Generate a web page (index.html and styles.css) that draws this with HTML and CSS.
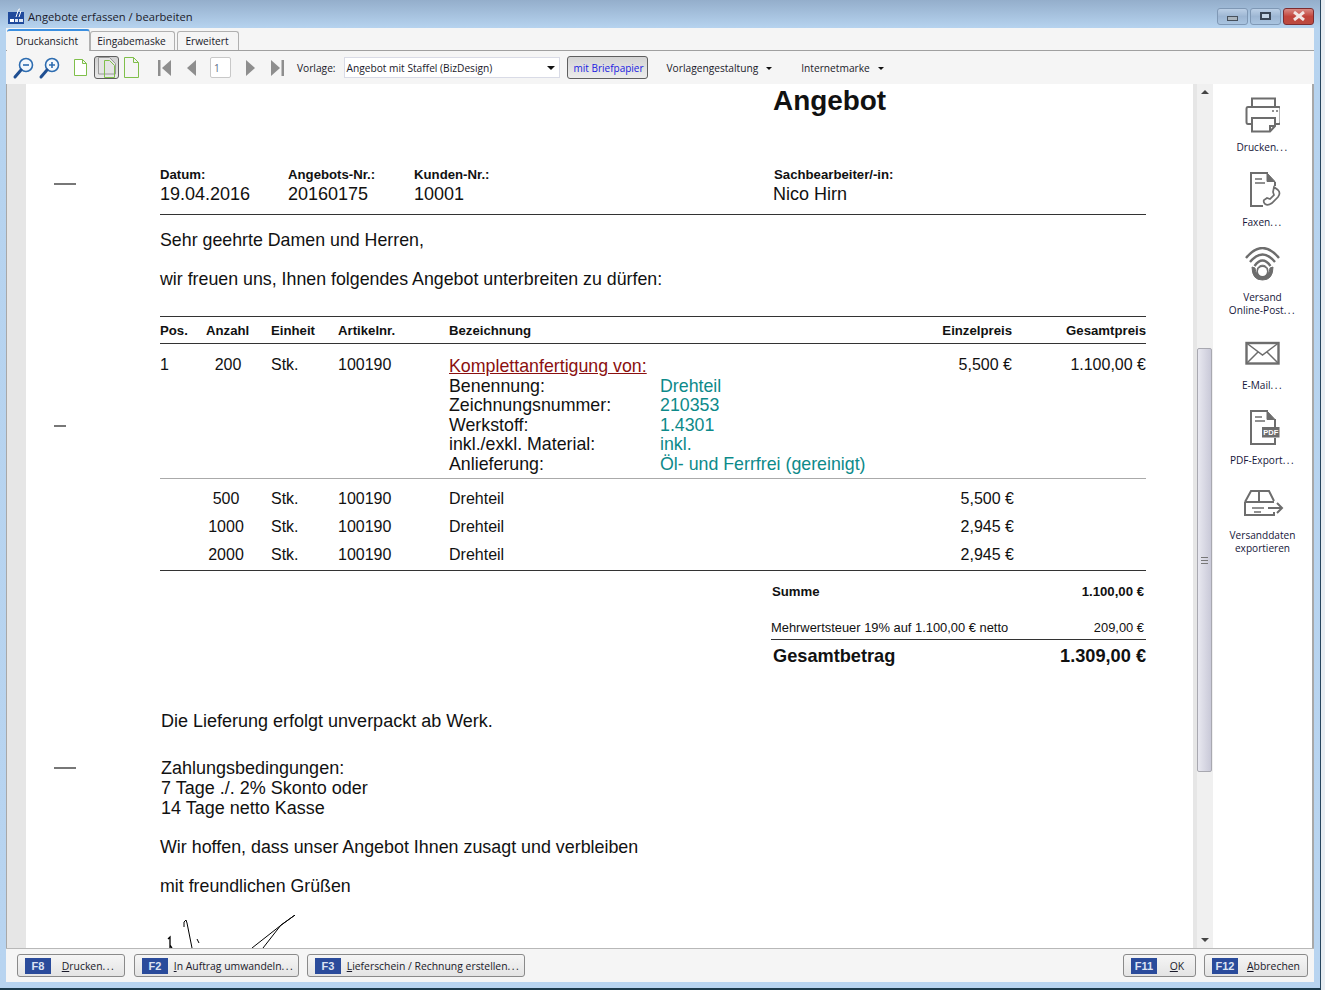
FILE: index.html
```html
<!DOCTYPE html>
<html lang="de">
<head>
    <meta charset="UTF-8">
    <meta name="viewport" content="width=device-width, initial-scale=1.0">
    <title>Angebote erfassen / bearbeiten</title>
    <link rel="stylesheet" href="styles.css">
</head>
<body>
    <div class="window">
        <div class="titlebar">
            <svg class="app-icon" width="16" height="16" viewBox="0 0 16 16">
                <rect x="0" y="4" width="16" height="12" fill="#1f4a9c"/>
                <path d="M8 9 L10 3 Q10.500 .5 12 1 M11 9 L13 3" stroke="#fff" stroke-width="1" fill="none"/>
                <rect x="2" y="11" width="4" height="3" fill="#fff"/>
                <rect x="7" y="11" width="3" height="3" fill="#dfe8f5"/>
                <rect x="11" y="11" width="4" height="3" fill="#dfe8f5"/>
            </svg>
            <span class="title">Angebote erfassen / bearbeiten</span>
            <div class="win-buttons">
                <div class="win-btn"><span class="min-glyph"></span></div>
                <div class="win-btn"><span class="max-glyph"></span></div>
                <div class="win-btn close">
                    <svg width="16" height="10" viewBox="0 0 16 10"><path d="M3 1 L13 9 M13 1 L3 9" stroke="#f2e6e4" stroke-width="3"/></svg>
                </div>
            </div>
        </div>

        <div class="client">
            <div class="tabs">
                <div class="tab active">Druckansicht</div>
                <div class="tab tab-2">Eingabemaske</div>
                <div class="tab tab-3">Erweitert</div>
            </div>

            <div class="toolbar">
                <svg class="tool-icon zoom-out" width="24" height="24" viewBox="0 0 24 24">
                    <circle cx="14" cy="9" r="6.5" fill="#f4f8fc" stroke="#2d6cb0" stroke-width="1.6"/>
                    <path d="M11 9 H17" stroke="#2d6cb0" stroke-width="1.6"/>
                    <path d="M9 14 L3 21" stroke="#1f4f92" stroke-width="3" stroke-linecap="round"/>
                </svg>
                <svg class="tool-icon zoom-in" width="24" height="24" viewBox="0 0 24 24">
                    <circle cx="14" cy="9" r="6.5" fill="#f4f8fc" stroke="#2d6cb0" stroke-width="1.6"/>
                    <path d="M11 9 H17 M14 6 V12" stroke="#2d6cb0" stroke-width="1.6"/>
                    <path d="M9 14 L3 21" stroke="#1f4f92" stroke-width="3" stroke-linecap="round"/>
                </svg>
                <svg class="page-small" width="13" height="17" viewBox="0 0 13 17">
                    <path d="M.5 .5 H8.5 L12.5 4.5 V16.5 H.5 Z M8.5 .5 V4.5 H12.5" fill="#fff" stroke="#7fbf4a"/>
                </svg>
                <div class="page-toggle">
                    <svg width="18" height="21" viewBox="0 0 18 21">
                        <path d="M.5 .5 H11.5 L17.5 6.5 V17 H.5 Z" fill="#e4e4e4" stroke="#9a9a9a"/>
                        <path d="M6.5 3.5 H11.5 L16.5 8.5 V20.5 H6.5 Z" fill="none" stroke="#7fbf4a"/>
                    </svg>
                </div>
                <svg class="page-large" width="15" height="21" viewBox="0 0 15 21">
                    <path d="M.5 .5 H9.5 L14.5 5.5 V20.5 H.5 Z M9.5 .5 V5.5 H14.5" fill="#f5f5f5" stroke="#7fbf4a"/>
                </svg>
                <svg class="nav-first" width="13" height="16" viewBox="0 0 13 16"><path d="M0 0 H2.5 V16 H0 Z M13 0 V16 L4 8 Z" fill="#8e8e8e"/></svg>
                <svg class="nav-prev" width="9" height="16" viewBox="0 0 9 16"><path d="M9 0 V16 L0 8 Z" fill="#8e8e8e"/></svg>
                <div class="page-input">1</div>
                <svg class="nav-next" width="9" height="16" viewBox="0 0 9 16"><path d="M0 0 V16 L9 8 Z" fill="#8e8e8e"/></svg>
                <svg class="nav-last" width="13" height="16" viewBox="0 0 13 16"><path d="M0 0 V16 L9 8 Z M10.5 0 H13 V16 H10.5 Z" fill="#8e8e8e"/></svg>
                <span class="vorlage-label">Vorlage:</span>
                <div class="select">
                    <span>Angebot mit Staffel (BizDesign)</span>
                    <i class="caret"></i>
                </div>
                <div class="brief-btn">mit Briefpapier</div>
                <div class="menu menu-1">Vorlagengestaltung<i class="caret small"></i></div>
                <div class="menu menu-2">Internetmarke<i class="caret small"></i></div>
            </div>

            <div class="main">
                <div class="margin-strip"></div>
                <div class="page">
                    <span class="fold fold-1"></span>
                    <span class="fold fold-2"></span>
                    <span class="fold fold-3"></span>

                    <h1>Angebot</h1>

                    <div class="meta">
                        <div><b>Datum:</b><span>19.04.2016</span></div>
                        <div><b>Angebots-Nr.:</b><span>20160175</span></div>
                        <div><b>Kunden-Nr.:</b><span>10001</span></div>
                        <div><b>Sachbearbeiter/-in:</b><span>Nico Hirn</span></div>
                    </div>

                    <p class="greeting">Sehr geehrte Damen und Herren,</p>
                    <p class="intro">wir freuen uns, Ihnen folgendes Angebot unterbreiten zu dürfen:</p>

                    <div class="row head">
                        <div>Pos.</div>
                        <div>Anzahl</div>
                        <div>Einheit</div>
                        <div>Artikelnr.</div>
                        <div>Bezeichnung</div>
                        <div class="num">Einzelpreis</div>
                        <div class="num">Gesamtpreis</div>
                    </div>

                    <div class="row item">
                        <div>1</div>
                        <div class="qty">200</div>
                        <div>Stk.</div>
                        <div>100190</div>
                        <div class="desc">
                            <div class="desc-title">Komplettanfertigung von:</div>
                            <div class="spec"><span>Benennung:</span><em>Drehteil</em></div>
                            <div class="spec"><span>Zeichnungsnummer:</span><em>210353</em></div>
                            <div class="spec"><span>Werkstoff:</span><em>1.4301</em></div>
                            <div class="spec"><span>inkl./exkl. Material:</span><em>inkl.</em></div>
                            <div class="spec"><span>Anlieferung:</span><em>Öl- und Ferrfrei (gereinigt)</em></div>
                        </div>
                        <div class="num">5,500 €</div>
                        <div class="num">1.100,00 €</div>
                    </div>

                    <div class="staffel">
                        <div class="row tier">
                            <div></div><div class="qty">500</div><div>Stk.</div><div>100190</div><div>Drehteil</div><div class="num wide">5,500 €</div><div></div>
                        </div>
                        <div class="row tier">
                            <div></div><div class="qty">1000</div><div>Stk.</div><div>100190</div><div>Drehteil</div><div class="num wide">2,945 €</div><div></div>
                        </div>
                        <div class="row tier">
                            <div></div><div class="qty">2000</div><div>Stk.</div><div>100190</div><div>Drehteil</div><div class="num wide">2,945 €</div><div></div>
                        </div>
                    </div>

                    <div class="totals">
                        <div class="total-row sum"><span>Summe</span><span>1.100,00 €</span></div>
                        <div class="total-row tax"><span>Mehrwertsteuer 19% auf 1.100,00 € netto</span><span>209,00 €</span></div>
                        <div class="total-row grand"><span>Gesamtbetrag</span><span>1.309,00 €</span></div>
                    </div>

                    <div class="closing">
                        <p class="delivery">Die Lieferung erfolgt unverpackt ab Werk.</p>
                        <p class="terms">Zahlungsbedingungen:<br>7 Tage ./. 2% Skonto oder<br>14 Tage netto Kasse</p>
                    </div>
                    <p class="hope">Wir hoffen, dass unser Angebot Ihnen zusagt und verbleiben</p>
                    <p class="regards">mit freundlichen Grüßen</p>

                    <svg class="signature" width="160" height="60" viewBox="0 0 160 60">
                        <path d="M6 24 L8 22 L8 33 M8 30 L10 33" fill="none" stroke="#000" stroke-width="1.300"/>
                        <path d="M22 12 L22 7 L24 5 L25 8 L30 33" fill="none" stroke="#000" stroke-width="1"/>
                        <path d="M35 24 L37 28" fill="none" stroke="#000" stroke-width="1"/>
                        <path d="M90 33 L118 11 L133 0 L119 10 L101 33" fill="none" stroke="#000" stroke-width="1"/>
                    </svg>
                </div>

                <div class="scrollbar">
                    <i class="arrow up"></i>
                    <div class="thumb"><span class="grip"></span></div>
                    <i class="arrow down"></i>
                </div>

                <div class="side">
                    <div class="side-item">
                        <svg width="36" height="36" viewBox="0 0 36 36" fill="none" stroke="#6d6d6d" stroke-width="2">
                            <path d="M8 10 V1.500 H31 V10"/>
                            <path d="M8 27 H4 Q2.500 27 2.500 25 V12 Q2.500 10 4 10 H35 Q36.500 10 36.500 12 V25 Q36.500 27 35 27 H31"/>
                            <path d="M8 21 H31 V29 L26 34.500 H8 Z M26 34.500 V29 H31"/>
                            <path d="M28 14 H30 M32 14 H34" stroke-width="1.500"/>
                        </svg>
                        <span>Drucken<i class="dots">...</i></span>
                    </div>
                    <div class="side-item">
                        <svg width="36" height="36" viewBox="0 0 36 36" fill="none" stroke="#6d6d6d" stroke-width="2">
                            <path d="M23 1 H6 V34 H18"/>
                            <path d="M30 14 V10"/>
                            <path d="M22 1 L30 9.500 H22 Z" fill="#6d6d6d" stroke-width="1"/>
                            <path d="M10 7 H17 M10 11 H20" stroke-width="1.500"/>
                            <path d="M29 15 L33 18 Q36 21 33 25 L27 31 Q23 34 20 32 Q18 30 19 28 L22 26 L25 27 L29 23 L28 20 Z" stroke-width="1.700"/>
                        </svg>
                        <span>Faxen<i class="dots">...</i></span>
                    </div>
                    <div class="side-item">
                        <svg width="36" height="36" viewBox="0 0 36 36" fill="none" stroke="#6d6d6d" stroke-width="2.400">
                            <path d="M2 11 Q18.500 -9 35 11"/>
                            <path d="M6 15 Q18.500 0 31 15"/>
                            <path d="M10.500 19 Q18.500 8 26.500 19"/>
                            <path d="M8 20 Q8 33 18.500 33 Q29 33 29 20 L26 21 Q26 25 23.500 26 A5.500 5.500 0 1 0 13.500 26 Q11 25 11 21 Z" fill="#6d6d6d" stroke-width="1"/>
                            <circle cx="18.500" cy="24.500" r="4.500" fill="#fff" stroke="none"/>
                        </svg>
                        <span>Versand<br>Online-Post<i class="dots">...</i></span>
                    </div>
                    <div class="side-item">
                        <svg width="36" height="36" viewBox="0 0 36 36" fill="none" stroke="#6d6d6d" stroke-width="2.400">
                            <rect x="2.500" y="8" width="32" height="20.500"/>
                            <path d="M2.500 8 L18.500 20 L34.500 8 M2.500 28.500 L14 17 M34.500 28.500 L23 17" stroke-width="1.500"/>
                        </svg>
                        <span>E-Mail<i class="dots">...</i></span>
                    </div>
                    <div class="side-item">
                        <svg width="36" height="36" viewBox="0 0 36 36" fill="none" stroke="#6d6d6d" stroke-width="2">
                            <path d="M23 1 H6 V34 H30 V28"/>
                            <path d="M30 17 V9"/>
                            <path d="M22 1 L30 9.500 H22 Z" fill="#6d6d6d" stroke-width="1"/>
                            <path d="M10 7 H17 M10 11 H20" stroke-width="1.500"/>
                            <rect x="17" y="17" width="17.500" height="10.500" fill="#6d6d6d" stroke="none"/>
                            <text x="25.750" y="25.200" text-anchor="middle" class="pdf-text">PDF</text>
                        </svg>
                        <span>PDF-Export<i class="dots">...</i></span>
                    </div>
                    <div class="side-item">
                        <svg width="42" height="36" viewBox="0 0 42 36" fill="none" stroke="#6d6d6d" stroke-width="2">
                            <path d="M3 17 L9 6 H27 L32 16 M17 6 V16 M3 17 H32 M3 17 V30 H32 V27"/>
                            <path d="M10 23 H22 M12 27 H19" stroke-width="1.500"/>
                            <path d="M26 23 H40 M35 18 L40 23 L35 28"/>
                        </svg>
                        <span>Versanddaten<br>exportieren</span>
                    </div>
                </div>
            </div>

            <div class="footer">
                <div class="action act-drucken"><b>F8</b><span class="lbl"><u>D</u>rucken<i class="dots">...</i></span></div>
                <div class="action act-auftrag"><b>F2</b><span class="lbl"><u>I</u>n Auftrag umwandeln<i class="dots">...</i></span></div>
                <div class="action act-schein"><b>F3</b><span class="lbl"><u>L</u>ieferschein / Rechnung erstellen<i class="dots">...</i></span></div>
                <div class="spacer"></div>
                <div class="action act-ok"><b>F11</b><span class="lbl"><u>O</u>K</span></div>
                <div class="action act-abbrechen"><b>F12</b><span class="lbl"><u>A</u>bbrechen</span></div>
            </div>
        </div>
    </div>
</body>
</html>
```

FILE: styles.css
```css
* {
    margin: 0;
    padding: 0;
    box-sizing: border-box;
}

html, body {
    height: 990px;
    overflow: hidden;
}

body {
    background-color: #e8edf2;
    font-family: "Open Sans", "Noto Sans", sans-serif;
    font-size: 11px;
    color: #1a1a2a;
}

.dots {
    font-style: normal;
    letter-spacing: 1.500px;
}

.window {
    width: 1321px;
    height: 990px;
    padding: 0 6px 6px;
    background: linear-gradient(to bottom, #94aecb 0, #b6d3ef 28px, #b8d4f0 100%);
    border-right: 1px solid #27465f;
    border-bottom: 2px solid #1c3a4c;
    display: flex;
    flex-direction: column;
}

/* title bar */
.titlebar {
    height: 28px;
    display: flex;
    align-items: center;
    padding: 2px 0 0 2px;
    flex-shrink: 0;
}

.app-icon {
    margin-top: 2px;
}

.title {
    margin-left: 4px;
    margin-top: 2px;
    font-size: 11.200px;
    color: #1b1b2b;
}

.win-buttons {
    margin-left: auto;
    margin-right: 0;
    margin-top: 2px;
    display: flex;
    gap: 2px;
}

.win-btn {
    width: 31px;
    height: 17px;
    border: 1px solid #7f98b5;
    border-radius: 3px;
    background: linear-gradient(to bottom, #bcd0e6, #9db6d3 50%, #a9c4e0);
    display: flex;
    align-items: center;
    justify-content: center;
}

.min-glyph {
    width: 11px;
    height: 5px;
    margin-top: 4px;
    background-color: #aab4bd;
    border: 1px solid #46505c;
}

.max-glyph {
    width: 11px;
    height: 8px;
    background-color: #c5d5e6;
    border: 2px solid #3a4656;
}

.win-btn.close {
    border-color: #7d2c30;
    background: linear-gradient(to bottom, #d98b85, #c2453c 50%, #bb4a40);
}

/* main panel */
.client {
    flex: 1;
    min-height: 0;
    background-color: #f5f5f5;
    display: flex;
    flex-direction: column;
}

.tabs {
    height: 23px;
    display: flex;
    align-items: flex-end;
    padding-left: 1px;
    border-bottom: 1px solid #a0a0a0;
    flex-shrink: 0;
}

.tab {
    height: 19px;
    padding: 2px 2px 0 0;
    margin-right: 2px;
    border: 1px solid #b0b0b0;
    border-bottom: none;
    border-radius: 3px 3px 0 0;
    background-color: #f5f5f5;
    font-size: 10.200px;
    text-align: center;
}

.tab-2 {
    width: 85px;
}

.tab-3 {
    width: 62px;
}

.tab.active {
    width: 83px;
    height: 22px;
    margin-right: 0;
    margin-bottom: -1px;
    padding-top: 3px;
    border: none;
    border-top: 2px solid #3b8fe0;
    border-right: 1px solid #b0b0b0;
}

.toolbar {
    height: 33px;
    display: flex;
    align-items: center;
    flex-shrink: 0;
    padding-left: 6px;
    font-size: 10.200px;
}

.zoom-in {
    margin-left: 2px;
}

.page-small {
    margin-left: 12px;
}

.page-toggle {
    width: 25px;
    height: 23px;
    margin-left: 7px;
    border: 1px solid #5f5f5f;
    border-radius: 3px;
    background: linear-gradient(to bottom, #d0d0d0, #e9e9e9);
    display: flex;
    align-items: center;
    justify-content: center;
}

.page-large {
    margin-left: 5px;
}

.nav-first {
    margin-left: 19px;
}

.nav-prev {
    margin-left: 16px;
}

.page-input {
    width: 21px;
    height: 21px;
    margin-left: 14px;
    padding: 3px 0 0 3px;
    background-color: #fff;
    border: 1px solid #c8c8c8;
    border-radius: 2px;
    font-size: 10px;
    color: #5a6a85;
}

.nav-next {
    margin-left: 15px;
}

.nav-last {
    margin-left: 16px;
}

.vorlage-label {
    margin-left: 13px;
}

.select {
    width: 216px;
    height: 21px;
    margin-left: 8px;
    padding: 0 4px 0 2px;
    background-color: #fff;
    border: 1px solid #d9dbe6;
    display: flex;
    align-items: center;
    justify-content: space-between;
}

.caret {
    width: 0;
    height: 0;
    border-left: 4px solid transparent;
    border-right: 4px solid transparent;
    border-top: 4px solid #111;
}

.caret.small {
    margin-left: 8px;
    display: inline-block;
    vertical-align: 2px;
    border-left-width: 3px;
    border-right-width: 3px;
    border-top-width: 3px;
}

.brief-btn {
    width: 81px;
    height: 23px;
    margin-left: 7px;
    padding-left: 3px;
    border: 1px solid #5f5f5f;
    border-radius: 3px;
    background: linear-gradient(to bottom, #d4d4d4, #ececec);
    color: #2020e0;
    font-size: 10px;
    line-height: 22px;
    text-align: center;
}

.menu-1 {
    margin-left: 19px;
}

.menu-2 {
    margin-left: 29px;
}

/* document area */
.main {
    flex: 1;
    min-height: 0;
    display: flex;
    background-color: #fff;
    border-right: 2px solid #a8a8a8;
}

.margin-strip {
    width: 20px;
    background-color: #e6e6e6;
    border-left: 1px solid #a8a8a8;
    flex-shrink: 0;
}

.page {
    width: 1167px;
    flex-shrink: 0;
    position: relative;
    overflow: hidden;
    padding: 0 47px 0 134px;
    background-color: #fff;
    font-family: "Liberation Sans", Arial, sans-serif;
    font-size: 17.800px;
    line-height: 20px;
    color: #111;
}

.fold {
    position: absolute;
    left: 28px;
    height: 2px;
    width: 22px;
    background-color: #777;
}

.fold-1 { top: 99px; }
.fold-2 { top: 341px; width: 12px; }
.fold-3 { top: 683px; }

h1 {
    margin-left: 613px;
    font-size: 27.900px;
    line-height: 34px;
}

.meta {
    margin-top: 48px;
    height: 49px;
    display: grid;
    grid-template-columns: 128px 126px 359px 1fr;
    border-bottom: 1px solid #333;
}

.meta b {
    display: block;
    font-size: 13.200px;
    line-height: 17px;
}

.meta div:last-child b {
    margin-left: 1px;
}

.meta span {
    display: block;
    font-size: 18px;
    line-height: 22px;
}

.greeting {
    margin-top: 15px;
}

.intro {
    margin-top: 19px;
}

.row {
    display: grid;
    grid-template-columns: 46px 65px 67px 111px 443px 120px 134px;
    font-size: 16px;
}

.num {
    text-align: right;
}

.num.wide {
    margin-right: -2px;
}

.head {
    margin-top: 27px;
    height: 28px;
    border-top: 1px solid #333;
    border-bottom: 1px solid #333;
    font-size: 13.200px;
    font-weight: bold;
    line-height: 27px;
}

.qty {
    width: 44px;
    text-align: center;
}

.tier .qty {
    margin-left: -2px;
}

.item {
    padding-top: 11px;
    height: 135px;
    border-bottom: 1px solid #aaa;
}

.desc {
    padding-top: 2px;
    font-size: 17.800px;
    line-height: 19.600px;
}

.desc-title {
    color: #8b1010;
    text-decoration: underline;
}

.spec {
    display: flex;
}

.spec span {
    width: 211px;
}

.spec em {
    font-style: normal;
    color: #0d8a8a;
}

.staffel {
    padding-top: 6px;
    height: 92px;
    border-bottom: 1px solid #333;
}

.tier {
    height: 28px;
    line-height: 28px;
}

.totals {
    margin-left: 611px;
}

.total-row {
    display: flex;
    justify-content: space-between;
}

.sum {
    margin-top: 12px;
    padding: 0 2px 0 1px;
    font-size: 13.200px;
    font-weight: bold;
    line-height: 18px;
}

.tax {
    margin-top: 18px;
    height: 21px;
    padding-right: 2px;
    border-bottom: 1px solid #333;
    font-size: 12.900px;
    line-height: 18px;
}

.grand {
    margin-top: 5px;
    padding-left: 2px;
    font-size: 18.200px;
    font-weight: bold;
    line-height: 22px;
}

.closing {
    margin-left: 1px;
    margin-top: 44px;
    font-size: 18px;
}

.terms {
    margin-top: 27px;
}

.hope {
    margin-top: 19px;
    font-size: 17.870px;
}

.regards {
    margin-top: 19px;
}

.signature {
    position: absolute;
    left: 136px;
    top: 831px;
}

/* scrollbar */
.scrollbar {
    width: 20px;
    flex-shrink: 0;
    position: relative;
    background-color: #f0f0f0;
    border-left: 4px solid #e6e6e6;
}

.thumb {
    position: absolute;
    left: 0;
    right: 1px;
    top: 264px;
    height: 424px;
    background: linear-gradient(to right, #e8e8f0, #c9c9d8);
    border: 1px solid #a8a8b0;
    border-radius: 2px;
    display: flex;
    align-items: center;
    justify-content: center;
}

.grip {
    width: 7px;
    height: 7px;
    border-top: 1px solid #777;
    border-bottom: 1px solid #777;
    background: linear-gradient(#777, #777) center / 100% 1px no-repeat;
}

.arrow {
    position: absolute;
    left: 4px;
    width: 0;
    height: 0;
    border-left: 4px solid transparent;
    border-right: 4px solid transparent;
}

.arrow.up {
    top: 6px;
    border-bottom: 4px solid #444;
}

.arrow.down {
    bottom: 6px;
    border-top: 4px solid #444;
}

/* right panel */
.side {
    flex: 1;
    padding-top: 13px;
    display: flex;
    flex-direction: column;
    align-items: center;
    gap: 18px;
    color: #16163a;
    font-size: 10.100px;
    line-height: 13px;
    text-align: center;
}

.side-item svg {
    display: block;
    margin: 0 auto 8px;
}

.pdf-text {
    font-family: "Liberation Sans", sans-serif;
    font-size: 7.500px;
    font-weight: bold;
    fill: #fff;
    stroke: none;
}

/* bottom buttons */
.footer {
    height: 34px;
    display: flex;
    align-items: center;
    padding: 0 6px 0 11px;
    border-top: 1px solid #b8b8b8;
    flex-shrink: 0;
}

.spacer {
    flex: 1;
}

.action {
    height: 23px;
    padding: 0 1px 0 7px;
    border: 1px solid #8a8a8a;
    border-radius: 3px;
    background: linear-gradient(to bottom, #f5f5f5, #e4e4e4);
    display: flex;
    align-items: center;
    font-size: 10.400px;
}

.act-drucken { width: 108px; margin-right: 9px; }
.act-auftrag { width: 165px; margin-right: 8px; }
.act-schein { width: 218px; }
.act-ok { width: 73px; margin-right: 8px; }
.act-abbrechen { width: 104px; }

.action b {
    min-width: 26px;
    height: 16px;
    padding: 0 3px;
    background-color: #2a4b9b;
    color: #dde4f3;
    font-family: "Liberation Sans", sans-serif;
    font-size: 11px;
    line-height: 16px;
    text-align: center;
}

.lbl {
    flex: 1;
    margin-left: 3px;
    text-align: center;
    white-space: nowrap;
}
```
